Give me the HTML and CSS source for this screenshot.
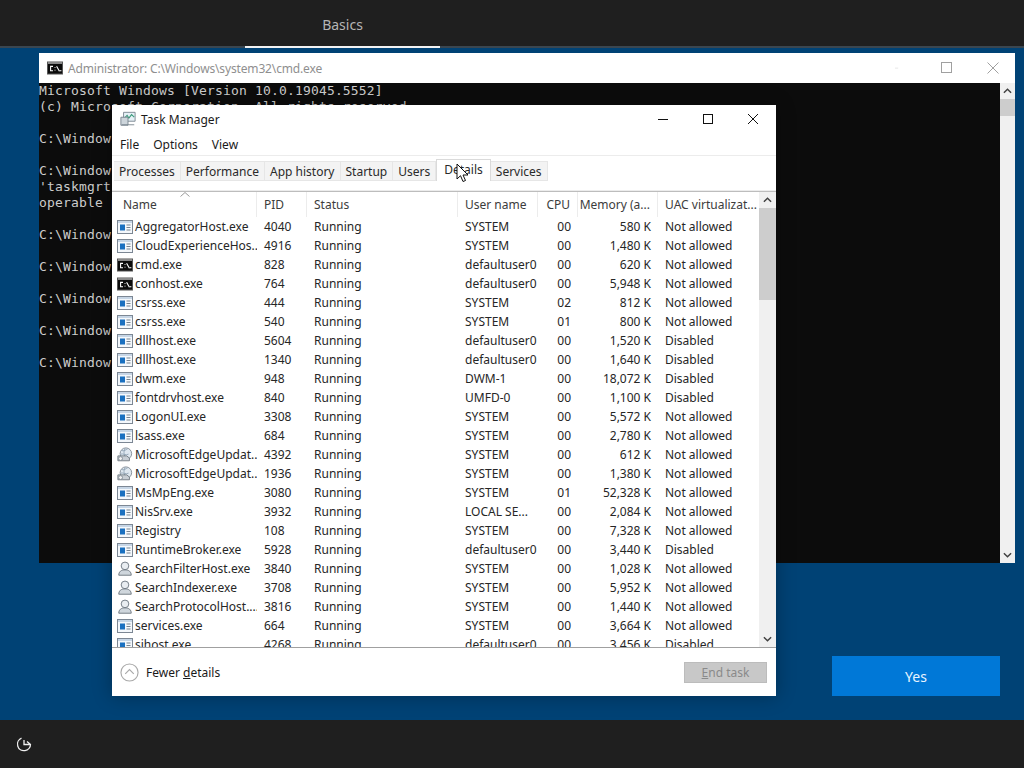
FILE: index.html
```html
<!DOCTYPE html>
<html lang="en">
<head>
<meta charset="utf-8">
<title>Task Manager</title>
<link rel="stylesheet" href="styles.css">
</head>
<body>
<svg class="defs" width="0" height="0" aria-hidden="true">
  <symbol id="i-app" viewBox="0 0 16 16">
    <rect x=".5" y="1.5" width="15" height="13" fill="#f4f8fc" stroke="#7c8794"/>
    <rect x="1" y="2" width="14" height="2" fill="#c7d6e6"/>
    <rect x="3" y="5.5" width="5" height="6" fill="#1a70c0"/>
    <path d="M9.5 6h4M9.5 8.5h4M9.5 11h4" stroke="#77838f"/>
  </symbol>
  <symbol id="i-cmd" viewBox="0 0 16 16">
    <rect x=".5" y="2" width="15" height="12" fill="#0c0c0c" stroke="#555"/>
    <rect x="1" y="2" width="14" height="2" fill="#8a8a8a"/>
    <path d="M6 6.4H3.6v4.4H6M8 7v.8M8 9.8v.8M9.6 6.2l2.8 5M12.8 10.8h1.6" fill="none" stroke="#fff" stroke-width="1.1"/>
  </symbol>
  <symbol id="i-edge" viewBox="0 0 18 18">
    <circle cx="10" cy="7.5" r="6.5" fill="#dfe8f0" stroke="#7f8a94"/>
    <path d="M5 4c3 1 5-1 7-2M4 8c3-1 6 2 9 0M9 1.500c-2 4-1 8 1 12" fill="none" stroke="#8fa2b3"/>
    <path d="M1 10h10l3 2.500v3H1z" fill="#c8ced4" stroke="#6e7880"/>
    <circle cx="4" cy="13" r="2.200" fill="#f2f2f2" stroke="#7f8a94"/>
  </symbol>
  <symbol id="i-person" viewBox="0 0 18 18">
    <circle cx="9" cy="5.500" r="4.300" fill="#e9edf1" stroke="#747d86" stroke-width="1.100"/>
    <path d="M2 16c0-4 2.500-6 7-6s7 2 7 6z" fill="#cfd6dc" stroke="#747d86" stroke-width="1.100"/>
  </symbol>
</svg>

<header class="topbar">
  <div class="step">Basics</div>
</header>

<main class="desktop">
  <section class="cmd">
    <div class="cmd-title">
      <svg class="cmd-icon"><use href="#i-cmd"/></svg>
      <span class="cmd-name">Administrator: C:\Windows\system32\cmd.exe</span>
      <span class="caption faded">
        <svg viewBox="0 0 46 12"><path d="M0 6.500h12" /></svg>
        <svg viewBox="0 0 12 12"><rect x=".5" y=".5" width="10" height="10"/></svg>
        <svg viewBox="0 0 12 12"><path d="M.5.500l11 11M11.500.500l-11 11"/></svg>
      </span>
    </div>
    <div class="cmd-body">
<pre class="console">Microsoft Windows [Version 10.0.19045.5552]
(c) Microsoft Corporation. All rights reserved.

C:\Windows\system32&gt;taskmgr

C:\Windows\system32&gt;taskmgrt
'taskmgrt' is not recognized as an internal or external command,
operable program or batch file.

C:\Windows\system32&gt;taskmgr

C:\Windows\system32&gt;taskmgr

C:\Windows\system32&gt;taskmgr

C:\Windows\system32&gt;taskmgr

C:\Windows\system32&gt;taskmgr</pre>
      <div class="vscroll cmd-scroll">
        <svg class="arrow" viewBox="0 0 10 6"><path d="M1 5l4-4 4 4"/></svg>
        <div class="track"><div class="thumb cmd-thumb"></div></div>
        <svg class="arrow" viewBox="0 0 10 6"><path d="M1 1l4 4 4-4"/></svg>
      </div>
    </div>
  </section>

  <section class="tm">
    <div class="tm-title">
      <svg class="tm-icon" viewBox="0 0 18 18">
        <path d="M4 1.500h13v10H4z" fill="#e6f0f6" stroke="#76838d"/>
        <path d="M5 8l3-3 2 3 3-4 3 3" fill="none" stroke="#3a9a7a" stroke-width="1.200"/>
        <path d="M1 7h8v9H1z" fill="#cdd5db" stroke="#76838d"/>
        <path d="M2 15.500h14" stroke="#76838d"/>
      </svg>
      <span class="tm-name">Task Manager</span>
      <span class="caption">
        <svg viewBox="0 0 12 12"><path d="M1 6.500h10"/></svg>
        <svg viewBox="0 0 12 12"><rect x="1.500" y="1.500" width="9" height="9"/></svg>
        <svg viewBox="0 0 12 12"><path d="M1 1l10 10M11 1L1 11"/></svg>
      </span>
    </div>
    <nav class="menu"><span>File</span><span>Options</span><span>View</span></nav>
    <div class="tabs">
      <span class="tab">Processes</span>
      <span class="tab">Performance</span>
      <span class="tab">App history</span>
      <span class="tab">Startup</span>
      <span class="tab">Users</span>
      <span class="tab active">Details</span>
      <span class="tab">Services</span>
    </div>
    <div class="list">
      <div class="table">
        <div class="row head">
          <span class="c-name"><svg class="sort" viewBox="0 0 10 5"><path d="M.5 4.500L5 .5l4.500 4"/></svg>Name</span>
          <span>PID</span><span>Status</span><span>User name</span>
          <span class="num">CPU</span><span class="num">Memory (a...</span><span>UAC virtualizat...</span>
        </div>
        <div class="rows">
          <div class="row"><span class="c-name"><svg><use href="#i-app"/></svg>AggregatorHost.exe</span><span>4040</span><span>Running</span><span>SYSTEM</span><span class="num">00</span><span class="num">580 K</span><span>Not allowed</span></div>
          <div class="row"><span class="c-name"><svg><use href="#i-app"/></svg>CloudExperienceHos...</span><span>4916</span><span>Running</span><span>SYSTEM</span><span class="num">00</span><span class="num">1,480 K</span><span>Not allowed</span></div>
          <div class="row"><span class="c-name"><svg><use href="#i-cmd"/></svg>cmd.exe</span><span>828</span><span>Running</span><span>defaultuser0</span><span class="num">00</span><span class="num">620 K</span><span>Not allowed</span></div>
          <div class="row"><span class="c-name"><svg><use href="#i-cmd"/></svg>conhost.exe</span><span>764</span><span>Running</span><span>defaultuser0</span><span class="num">00</span><span class="num">5,948 K</span><span>Not allowed</span></div>
          <div class="row"><span class="c-name"><svg><use href="#i-app"/></svg>csrss.exe</span><span>444</span><span>Running</span><span>SYSTEM</span><span class="num">02</span><span class="num">812 K</span><span>Not allowed</span></div>
          <div class="row"><span class="c-name"><svg><use href="#i-app"/></svg>csrss.exe</span><span>540</span><span>Running</span><span>SYSTEM</span><span class="num">01</span><span class="num">800 K</span><span>Not allowed</span></div>
          <div class="row"><span class="c-name"><svg><use href="#i-app"/></svg>dllhost.exe</span><span>5604</span><span>Running</span><span>defaultuser0</span><span class="num">00</span><span class="num">1,520 K</span><span>Disabled</span></div>
          <div class="row"><span class="c-name"><svg><use href="#i-app"/></svg>dllhost.exe</span><span>1340</span><span>Running</span><span>defaultuser0</span><span class="num">00</span><span class="num">1,640 K</span><span>Disabled</span></div>
          <div class="row"><span class="c-name"><svg><use href="#i-app"/></svg>dwm.exe</span><span>948</span><span>Running</span><span>DWM-1</span><span class="num">00</span><span class="num">18,072 K</span><span>Disabled</span></div>
          <div class="row"><span class="c-name"><svg><use href="#i-app"/></svg>fontdrvhost.exe</span><span>840</span><span>Running</span><span>UMFD-0</span><span class="num">00</span><span class="num">1,100 K</span><span>Disabled</span></div>
          <div class="row"><span class="c-name"><svg><use href="#i-app"/></svg>LogonUI.exe</span><span>3308</span><span>Running</span><span>SYSTEM</span><span class="num">00</span><span class="num">5,572 K</span><span>Not allowed</span></div>
          <div class="row"><span class="c-name"><svg><use href="#i-app"/></svg>lsass.exe</span><span>684</span><span>Running</span><span>SYSTEM</span><span class="num">00</span><span class="num">2,780 K</span><span>Not allowed</span></div>
          <div class="row"><span class="c-name"><svg><use href="#i-edge"/></svg>MicrosoftEdgeUpdat...</span><span>4392</span><span>Running</span><span>SYSTEM</span><span class="num">00</span><span class="num">612 K</span><span>Not allowed</span></div>
          <div class="row"><span class="c-name"><svg><use href="#i-edge"/></svg>MicrosoftEdgeUpdat...</span><span>1936</span><span>Running</span><span>SYSTEM</span><span class="num">00</span><span class="num">1,380 K</span><span>Not allowed</span></div>
          <div class="row"><span class="c-name"><svg><use href="#i-app"/></svg>MsMpEng.exe</span><span>3080</span><span>Running</span><span>SYSTEM</span><span class="num">01</span><span class="num">52,328 K</span><span>Not allowed</span></div>
          <div class="row"><span class="c-name"><svg><use href="#i-app"/></svg>NisSrv.exe</span><span>3932</span><span>Running</span><span>LOCAL SE...</span><span class="num">00</span><span class="num">2,084 K</span><span>Not allowed</span></div>
          <div class="row"><span class="c-name"><svg><use href="#i-app"/></svg>Registry</span><span>108</span><span>Running</span><span>SYSTEM</span><span class="num">00</span><span class="num">7,328 K</span><span>Not allowed</span></div>
          <div class="row"><span class="c-name"><svg><use href="#i-app"/></svg>RuntimeBroker.exe</span><span>5928</span><span>Running</span><span>defaultuser0</span><span class="num">00</span><span class="num">3,440 K</span><span>Disabled</span></div>
          <div class="row"><span class="c-name"><svg><use href="#i-person"/></svg>SearchFilterHost.exe</span><span>3840</span><span>Running</span><span>SYSTEM</span><span class="num">00</span><span class="num">1,028 K</span><span>Not allowed</span></div>
          <div class="row"><span class="c-name"><svg><use href="#i-person"/></svg>SearchIndexer.exe</span><span>3708</span><span>Running</span><span>SYSTEM</span><span class="num">00</span><span class="num">5,952 K</span><span>Not allowed</span></div>
          <div class="row"><span class="c-name"><svg><use href="#i-person"/></svg>SearchProtocolHost....</span><span>3816</span><span>Running</span><span>SYSTEM</span><span class="num">00</span><span class="num">1,440 K</span><span>Not allowed</span></div>
          <div class="row"><span class="c-name"><svg><use href="#i-app"/></svg>services.exe</span><span>664</span><span>Running</span><span>SYSTEM</span><span class="num">00</span><span class="num">3,664 K</span><span>Not allowed</span></div>
          <div class="row"><span class="c-name"><svg><use href="#i-app"/></svg>sihost.exe</span><span>4268</span><span>Running</span><span>defaultuser0</span><span class="num">00</span><span class="num">3,456 K</span><span>Disabled</span></div>
        </div>
      </div>
      <div class="vscroll tm-scroll">
        <svg class="arrow" viewBox="0 0 10 6"><path d="M1 5l4-4 4 4"/></svg>
        <div class="track"><div class="thumb tm-thumb"></div></div>
        <svg class="arrow" viewBox="0 0 10 6"><path d="M1 1l4 4 4-4"/></svg>
      </div>
    </div>
    <div class="tm-foot">
      <span class="fewer">
        <svg viewBox="0 0 20 20"><circle cx="10" cy="10" r="9"/><path d="M5.500 11.500L10 7l4.500 4.500"/></svg>
        <span>Fewer <u>d</u>etails</span>
      </span>
      <button class="end" type="button" disabled><u>E</u>nd task</button>
    </div>
    <svg class="pointer" viewBox="0 0 13 21"><path d="M1 1v15l3.500-3.300L7 18.500l2.500-1-2.500-5.500h5z"/></svg>
  </section>

  <button class="yes" type="button">Yes</button>
</main>

<footer class="bottombar">
  <svg class="ease" viewBox="0 0 16 16"><path d="M5.500 2.200A6.500 6.500 0 1 0 14.500 8M8 4v4.500h6.500M11 5.500l3.500 3"/></svg>
</footer>
</body>
</html>
```
FILE: styles.css
```css
* { box-sizing: border-box; }
html, body { height: 100%; }
body {
  margin: 0;
  display: flex;
  flex-direction: column;
  height: 768px;
  overflow: hidden;
  background: #004275;
  font-family: "Noto Sans", "Open Sans", sans-serif;
  font-size: 12px;
  color: #1a1a1a;
}
.defs { position: absolute; }

.topbar {
  height: 48px;
  flex: none;
  background: #1f1f1f;
  border-bottom: 2px solid #3a4650;
  display: flex;
  padding-left: 245px;
}
.step {
  width: 195px;
  height: 48px;
  margin-bottom: -2px;
  border-bottom: 2px solid #f2f2f2;
  color: #b5b5b5;
  font-size: 14px;
  line-height: 50px;
  text-align: center;
}

.desktop {
  flex: 1;
  position: relative;
  display: flex;
  flex-direction: column;
  align-items: flex-end;
  justify-content: flex-end;
  padding: 0 24px 24px 0;
}
.yes {
  width: 168px;
  height: 40px;
  border: 0;
  background: #0078d7;
  color: #e8f4ff;
  font: 14px "Noto Sans", sans-serif;
}

.bottombar {
  height: 48px;
  flex: none;
  background: #1f1f1f;
  display: flex;
  align-items: center;
  padding-left: 16px;
}
.ease { width: 16px; height: 16px; fill: none; stroke: #f0f0f0; stroke-width: 1.300; }

/* Console window */
.cmd {
  position: absolute;
  left: 39px;
  top: 5px;
  width: 976px;
  height: 510px;
  background: #fff;
  display: flex;
  flex-direction: column;
}
.cmd-title {
  height: 30px;
  flex: none;
  display: flex;
  align-items: center;
  padding-left: 8px;
  color: #8f8f8f;
}
.cmd-icon { width: 16px; height: 16px; margin-right: 5px; }
.cmd-name { flex: 1; letter-spacing: -.15px; }
.caption { display: flex; }
.caption svg { width: 12px; height: 12px; fill: none; stroke: #111; stroke-width: 1; }
.tm-title .caption { gap: 33px; margin-right: 17px; }
.cmd-title .caption { gap: 34px; margin-right: 16px; }
.faded svg { stroke: #a0a0a0; }
.cmd-body { flex: 1; min-height: 0; display: flex; }
.console {
  flex: 1;
  margin: 0;
  padding: 0;
  background: #0c0c0c;
  color: #cccccc;
  font-family: "DejaVu Sans Mono", monospace;
  font-size: 13px;
  letter-spacing: .17px;
  line-height: 16px;
  overflow: hidden;
}

.vscroll {
  flex: none;
  display: flex;
  flex-direction: column;
  align-items: center;
  background: #f0f0f0;
}
.arrow { flex: none; width: 9px; height: 6px; margin: 5px 0; fill: none; stroke: #404040; stroke-width: 1.600; }
.track { flex: 1; width: 100%; }
.thumb { background: #cdcdcd; }
.cmd-scroll { width: 15px; }
.cmd-thumb { height: 17px; }
.tm-scroll { width: 17px; }
.tm-thumb { height: 92px; }

/* Task Manager window */
.tm {
  position: absolute;
  left: 112px;
  top: 57px;
  width: 664px;
  height: 591px;
  background: #fff;
  display: flex;
  flex-direction: column;
  box-shadow: 0 0 18px rgba(0, 0, 0, .3);
}
.tm-title {
  height: 28px;
  flex: none;
  display: flex;
  align-items: center;
  padding-left: 8px;
}
.tm-icon { width: 16px; height: 16px; margin-right: 5px; }
.tm-name { flex: 1; }
.menu {
  height: 22px;
  flex: none;
  display: flex;
  align-items: center;
  gap: 14px;
  padding-left: 8px;
}
.tabs {
  height: 37px;
  flex: none;
  display: flex;
  align-items: flex-start;
  padding: 5px 0 0 2px;
  border-top: 1px solid #ececec;
  border-bottom: 1px solid #bdbdbd;
  box-shadow: inset 0 -12px 0 -11px #ececec;
}
.tab {
  height: 20px;
  line-height: 19px;
  padding: 0 5px;
  background: #f3f3f3;
  border: 1px solid #e6e6e6;
  border-left-width: 0;
  color: #2a2a2a;
}
.tab.active {
  height: 22px;
  margin-top: -2px;
  padding: 0 7px 0 7px;
  background: #fff;
  border: 1px solid #dadada;
  border-bottom: 0;
}

.list {
  flex: 1;
  min-height: 0;
  display: flex;
  border-bottom: 1px solid #a0a0a0;
}
.table { flex: 1; min-width: 0; overflow: hidden; }
.rows { height: 430px; overflow: hidden; padding-top: 0; }
.row {
  display: grid;
  grid-template-columns: 145px 50px 151px 80px 40px 80px 1fr;
  height: 19px;
  line-height: 19px;
  color: #262626;
}
.row > span { padding-left: 7px; white-space: nowrap; overflow: hidden; }
.row > .num { padding: 0 7px 0 0; text-align: right; }
.row > .c-name {
  display: flex;
  align-items: center;
  gap: 2px;
  padding-left: 5px;
}
.c-name svg { width: 16px; height: 16px; flex: none; }
.head {
  height: 25px;
  line-height: 25px;
  color: #3c3c3c;
}
.head > span { border-right: 1px solid #ececec; }
.head > span:last-child { border-right: 0; }
.head > .c-name { position: relative; padding-left: 11px; }
.c-name .sort {
  position: absolute;
  left: 68px;
  top: 0;
  width: 10px;
  height: 5px;
  fill: none;
  stroke: #9a9a9a;
}
.tm-foot {
  height: 48px;
  flex: none;
  display: flex;
  align-items: center;
  justify-content: space-between;
  padding: 0 9px 0 8px;
}
.fewer { display: flex; align-items: center; gap: 7px; }
.fewer svg { width: 19px; height: 19px; fill: none; stroke: #a9a9a9; stroke-width: 1.200; }
.end {
  width: 83px;
  height: 21px;
  padding: 0;
  border: 1px solid #bcbcbc;
  background: #c8c8c8;
  color: #8a8a8a;
  font: 12px "Noto Sans", sans-serif;
}
.pointer {
  position: absolute;
  left: 344px;
  top: 58px;
  width: 13px;
  height: 21px;
  fill: #fff;
  stroke: #111;
  stroke-width: 1;
}
```
